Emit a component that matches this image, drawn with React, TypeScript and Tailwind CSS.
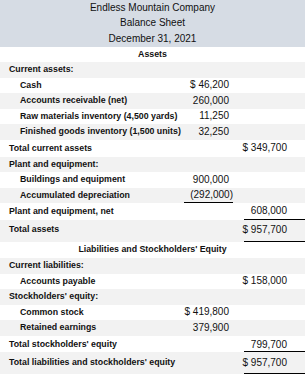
import React from "react";

type RowProps = {
  label?: string;
  indent?: boolean;
  v1?: React.ReactNode;
  v2?: React.ReactNode;
  line1?: boolean;
  line2?: boolean;
  gray?: boolean;
  h: string;
  align?: string;
};

function Row({ label, indent, v1, v2, line1, line2, gray, h, align = "items-center" }: RowProps) {
  return (
    <div className={`flex ${h} ${gray ? "bg-[#f2f2f2]" : "bg-white"}`}>
      <div
        className={`flex flex-1 ${align} ${indent ? "pl-[20px]" : "pl-[9px]"} text-[8.8px] font-bold leading-[11px] whitespace-nowrap`}
      >
        {label}
      </div>
      <div
        className={`flex w-[49px] ${align} justify-end pr-[4px] text-[10px] leading-[12px] whitespace-nowrap ${
          line1 ? "border-b border-black" : ""
        }`}
      >
        {v1}
      </div>
      <div className="w-[11px]" />
      <div
        className={`flex w-[61px] ${align} justify-end pr-[18px] text-[10px] leading-[12px] whitespace-nowrap ${
          line2 ? "border-b border-black" : ""
        }`}
      >
        {v2}
      </div>
    </div>
  );
}

export default function App() {
  return (
    <div
      className="w-[305px] h-[377px] bg-white text-[#111] overflow-hidden"
      style={{ fontFamily: '"Liberation Sans", Arial, sans-serif' }}
    >
      <div className="bg-[#d6dce4] text-[10px] leading-[12px]">
        <div className="flex h-[15.5px] items-center justify-center">Endless Mountain Company</div>
        <div className="flex h-[15.5px] items-center justify-center">Balance Sheet</div>
        <div className="flex h-[15.5px] items-center justify-center">December 31, 2021</div>
      </div>
      <div className="flex h-[15.5px] items-center justify-center text-[8.8px] font-bold">Assets</div>
      <Row h="h-[15.5px]" gray label="Current assets:" />
      <Row h="h-[15.5px]" indent label="Cash" v1="$ 46,200" />
      <Row h="h-[15.5px]" gray indent label="Accounts receivable (net)" v1="260,000" />
      <Row h="h-[15.5px]" indent label="Raw materials inventory (4,500 yards)" v1="11,250" />
      <Row h="h-[15.5px]" gray indent label="Finished goods inventory (1,500 units)" v1="32,250" />
      <Row h="h-[17px]" label="Total current assets" v2="$ 349,700" />
      <Row h="h-[15.5px]" gray label="Plant and equipment:" />
      <Row h="h-[15.5px]" indent label="Buildings and equipment" v1="900,000" />
      <Row
        h="h-[15.5px]"
        gray
        indent
        label="Accumulated depreciation"
        v1={
          <span>
            (292,000<span className="mr-[-4px]">)</span>
          </span>
        }
        line1
      />
      <Row h="h-[17px]" label="Plant and equipment, net" v2="608,000" line2 />
      <Row h="h-[22px]" gray align="items-start pt-[4px]" label="Total assets" v2="$ 957,700" line2 />
      <div className="flex h-[16px] items-center justify-center text-[8.8px] font-bold">
        Liabilities and Stockholders' Equity
      </div>
      <Row h="h-[15.5px]" gray label="Current liabilities:" />
      <Row h="h-[15.5px]" indent label="Accounts payable" v2="$ 158,000" />
      <Row h="h-[15.5px]" gray label="Stockholders' equity:" />
      <Row h="h-[15.5px]" indent label="Common stock" v1="$ 419,800" />
      <Row h="h-[15.5px]" gray indent label="Retained earnings" v1="379,900" />
      <Row h="h-[16.5px]" align="items-start pt-[3px]" label="Total stockholders' equity" v2="799,700" line2 />
      <Row
        h="h-[22px]"
        gray
        align="items-start pt-[5px]"
        label="Total liabilities and stockholders' equity"
        v2="$ 957,700"
        line2
      />
    </div>
  );
}
